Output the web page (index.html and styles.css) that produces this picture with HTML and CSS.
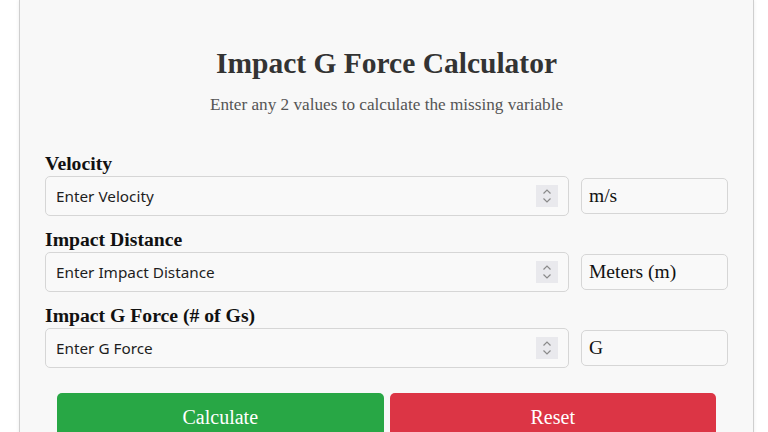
FILE: index.html
```html
<!DOCTYPE html>
<html lang="en">
<head>
<meta charset="utf-8">
<title>Impact G Force Calculator</title>
<link rel="stylesheet" href="styles.css">
</head>
<body>
<div class="card">
  <h1 class="title">Impact G Force Calculator</h1>
  <p class="subtitle">Enter any 2 values to calculate the missing variable</p>

  <div class="group">
    <label class="label" for="v">Velocity</label>
    <div class="row">
      <div class="num">
        <input id="v" class="num-input" type="text" placeholder="Enter Velocity">
        <span class="spin"><svg width="22" height="22" viewBox="0 0 22 22"><path d="M7.5 8.5 L11 5 L14.5 8.5 M7.5 13.5 L11 17 L14.5 13.5" fill="none" stroke="#8a8a8a" stroke-width="1.2"/></svg></span>
      </div>
      <div class="unit">m/s</div>
    </div>
  </div>

  <div class="group">
    <label class="label" for="d">Impact Distance</label>
    <div class="row">
      <div class="num">
        <input id="d" class="num-input" type="text" placeholder="Enter Impact Distance">
        <span class="spin"><svg width="22" height="22" viewBox="0 0 22 22"><path d="M7.5 8.5 L11 5 L14.5 8.5 M7.5 13.5 L11 17 L14.5 13.5" fill="none" stroke="#8a8a8a" stroke-width="1.2"/></svg></span>
      </div>
      <div class="unit">Meters (m)</div>
    </div>
  </div>

  <div class="group">
    <label class="label" for="g">Impact G Force (# of Gs)</label>
    <div class="row">
      <div class="num">
        <input id="g" class="num-input" type="text" placeholder="Enter G Force">
        <span class="spin"><svg width="22" height="22" viewBox="0 0 22 22"><path d="M7.5 8.5 L11 5 L14.5 8.5 M7.5 13.5 L11 17 L14.5 13.5" fill="none" stroke="#8a8a8a" stroke-width="1.2"/></svg></span>
      </div>
      <div class="unit">G</div>
    </div>
  </div>

  <div class="buttons">
    <button class="btn btn-calc" type="button">Calculate</button>
    <button class="btn btn-reset" type="button">Reset</button>
  </div>
</div>
</body>
</html>
```
FILE: styles.css
```css
html, body {
  margin: 0;
  padding: 0;
  background: #ffffff;
}
body {
  font-family: "Liberation Serif", "Times New Roman", serif;
  color: #222;
}
.card {
  box-sizing: border-box;
  width: 735px;
  margin-left: 19px;
  padding: 46px 25px 40px;
  background: #f8f8f8;
  border: 1px solid #cfcfcf;
  border-top: 0;
  box-shadow: 0 0 4px rgba(0,0,0,0.08);
}
.title {
  margin: 0;
  text-align: center;
  font-size: 29.5px;
  line-height: 34px;
  font-weight: bold;
  color: #333;
}
.subtitle {
  margin: 16px 0 38px;
  text-align: center;
  font-size: 17.2px;
  line-height: 18px;
  color: #555;
}
.group {
  margin-bottom: 12px;
}
.label {
  display: block;
  font-size: 19.7px;
  line-height: 22px;
  font-weight: bold;
  color: #111;
  margin-bottom: 2px;
}
.row {
  display: flex;
  align-items: center;
  gap: 12px;
}
.num {
  position: relative;
  flex: 1;
}
.num-input {
  box-sizing: border-box;
  display: block;
  width: 100%;
  height: 40px;
  padding: 0 40px 0 10px;
  border: 1px solid #d6d6d6;
  border-radius: 5px;
  background: #f9f9f9;
  font-family: "Noto Sans", "Open Sans", sans-serif;
  font-size: 15.3px;
  color: #222;
  outline: none;
}
.num-input::placeholder {
  color: #1e1e1e;
  opacity: 1;
}
.spin {
  position: absolute;
  right: 11px;
  top: 9px;
  width: 22px;
  height: 22px;
  background: #e9e9ed;
  display: block;
}
.spin svg {
  display: block;
}
.unit {
  box-sizing: border-box;
  width: 147px;
  height: 36px;
  padding: 0 7px;
  border: 1px solid #d6d6d6;
  border-radius: 5px;
  background: #f9f9f9;
  font-size: 19.5px;
  line-height: 34px;
  color: #111;
}
.buttons {
  display: flex;
  gap: 6px;
  margin: 25px 12px 0;
}
.btn {
  flex: 1;
  height: 48px;
  border: 0;
  border-radius: 5px;
  font-family: "Liberation Serif", "Times New Roman", serif;
  font-size: 20px;
  color: #fff;
  padding: 0;
}
.btn-calc {
  background: #28a745;
}
.btn-reset {
  background: #dc3545;
}
```
